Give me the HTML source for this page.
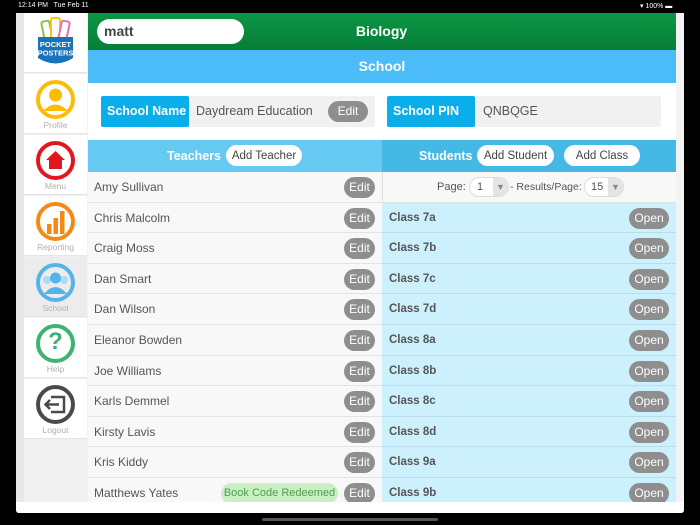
<!DOCTYPE html>
<html><head><meta charset="utf-8"><style>
*{box-sizing:border-box;margin:0;padding:0;white-space:nowrap}
body{width:700px;height:525px;background:#000;position:relative;overflow:hidden;font-family:"Liberation Sans",Arial,sans-serif}
.a{position:absolute}
.st{color:#fff;font-size:7px;top:2px}
#frame{left:16px;top:13px;width:668px;height:500px;background:#f3f3f3;border-radius:0 0 3px 3px}
.side{left:24px;width:63px;background:#fff;border-bottom:1px solid #e6e6e6}
.lbl{position:absolute;bottom:3px;width:100%;text-align:center;font-size:8.5px;color:#b0b0b0}
.ic{position:absolute;left:12px;top:6px;width:39px;height:39px;border-radius:50%;border:4px solid}
.btn{position:absolute;background:#8e8e8e;color:#fff;border-radius:11px;font-size:12px;font-weight:normal;text-align:center;line-height:21px;height:21px}
.wbtn{position:absolute;background:#fff;color:#444;border-radius:11px;font-size:11.5px;text-align:center;line-height:22px;height:21px;top:5px}
.col{position:absolute;top:172px;width:294px;height:330px;overflow:hidden}
.tr{position:relative;height:30.6px;background:#f8f8f8;border-bottom:1px solid #e3e3e3;font-size:12px;color:#555;line-height:30px;padding-left:6px}
.sr{position:relative;height:30.6px;background:#cdf0fd;border-bottom:1px solid #bcdde8;font-size:11.5px;color:#555;font-weight:bold;line-height:31px;padding-left:7px}
.tr .btn{left:256px;top:5px;width:31px}
.sr .btn{left:247px;top:5px;width:40px}
</style></head><body>
<div class="a st" style="left:18px">12:14 PM&nbsp;&nbsp; Tue Feb 11</div>
<div class="a st" style="left:640px">▾ 100% ▬</div>
<div class="a" id="frame"></div>
<div class="a" style="left:16px;top:13px;width:8px;height:490px;background:#e8e8e8"></div>
<div class="a" style="left:24px;top:13px;width:63px;height:490px;background:#f0f0f0"></div>
<div class="a side" style="top:13px;height:60px">
 <svg width="63" height="60" viewBox="0 0 63 60">
  <rect x="19" y="8" width="8" height="20" rx="2" fill="#fff" stroke="#8bc34a" stroke-width="2" transform="rotate(-12 23 18)"/>
  <rect x="27" y="5" width="9" height="20" rx="2" fill="#fff" stroke="#f5c518" stroke-width="2"/>
  <rect x="36" y="8" width="8" height="20" rx="2" fill="#fff" stroke="#e86fb0" stroke-width="2" transform="rotate(12 40 18)"/>
  <path d="M14 24 H49 V45 Q31.5 56 14 45 Z" fill="#1a73b8"/>
  <text x="31.5" y="34" font-size="7.5" font-weight="bold" fill="#fff" text-anchor="middle" font-family="Liberation Sans">POCKET</text>
  <text x="31.5" y="42.5" font-size="7.5" font-weight="bold" fill="#fff" text-anchor="middle" font-family="Liberation Sans">POSTERS</text>
 </svg>
</div>
<div class="a side" style="top:74px;height:60px"><div class="ic" style="border-color:#fbbc05"></div>
 <svg class="a" style="left:12px;top:6px" width="39" height="39" viewBox="0 0 39 39"><circle cx="19.5" cy="15" r="6.5" fill="#fbbc05"/><path d="M7 31 Q19.5 18 32 31 Z" fill="#fbbc05"/></svg><div class="lbl">Profile</div></div>
<div class="a side" style="top:135px;height:60px"><div class="ic" style="border-color:#e2171e"></div>
 <svg class="a" style="left:12px;top:6px" width="39" height="39" viewBox="0 0 39 39"><path d="M10 19 L19.5 10 L29 19 H26 V28 H13 V19 Z" fill="#e2171e"/></svg><div class="lbl">Menu</div></div>
<div class="a side" style="top:196px;height:60px"><div class="ic" style="border-color:#f28a14"></div>
 <svg class="a" style="left:12px;top:6px" width="39" height="39" viewBox="0 0 39 39"><rect x="11" y="22" width="4.5" height="10" fill="#f28a14"/><rect x="17.5" y="16" width="4.5" height="16" fill="#f28a14"/><rect x="24" y="9" width="4.5" height="23" fill="#f28a14"/></svg><div class="lbl">Reporting</div></div>
<div class="a side" style="top:257px;height:60px;background:#ececec"><div class="ic" style="border-color:#54b4ea"></div>
 <svg class="a" style="left:12px;top:6px" width="39" height="39" viewBox="0 0 39 39"><circle cx="11" cy="17" r="4" fill="#a9dbf6"/><circle cx="28" cy="17" r="4" fill="#a9dbf6"/><circle cx="19.5" cy="15" r="5.5" fill="#54b4ea"/><path d="M8 31 Q19.5 17 31 31 Z" fill="#54b4ea"/></svg><div class="lbl">School</div></div>
<div class="a side" style="top:318px;height:60px"><div class="ic" style="border-color:#3cb371"></div>
 <div class="a" style="left:12px;top:10px;width:39px;text-align:center;font-size:24px;font-weight:bold;color:#3cb371">?</div><div class="lbl">Help</div></div>
<div class="a side" style="top:379px;height:60px"><div class="ic" style="border-color:#4a4a4a"></div>
 <svg class="a" style="left:12px;top:6px" width="39" height="39" viewBox="0 0 39 39"><path d="M15 12 H28 V27 H15" fill="none" stroke="#4a4a4a" stroke-width="2.5"/><path d="M23 19.5 H10 M14 15 L9.5 19.5 L14 24" fill="none" stroke="#4a4a4a" stroke-width="2.5"/></svg><div class="lbl">Logout</div></div>

<div class="a" style="left:88px;top:13px;width:588px;height:490px;background:#fff"></div>
<div class="a" style="left:88px;top:13px;width:588px;height:37px;background:linear-gradient(#0a9744,#077d38)"></div>
<div class="a" style="left:97px;top:19px;width:147px;height:25px;background:#fff;border-radius:13px;font-size:14px;font-weight:bold;color:#444;line-height:25px;padding-left:7px">matt</div>
<div class="a" style="left:300px;top:23px;width:163px;text-align:center;color:#fff;font-size:14px;font-weight:bold">Biology</div>
<div class="a" style="left:88px;top:50px;width:588px;height:33px;background:#4bbcf8;color:#fff;font-size:14px;font-weight:bold;text-align:center;line-height:33px">School</div>

<div class="a" style="left:101px;top:96px;width:274px;height:31px;background:#f1f1f1;border-radius:2px"></div>
<div class="a" style="left:101px;top:96px;width:88px;height:31px;background:#0aaeea;border-radius:2px;color:#fff;font-weight:bold;font-size:12.5px;line-height:31px;padding-left:6px">School Name</div>
<div class="a" style="left:196px;top:96px;line-height:31px;font-size:12.5px;color:#555">Daydream Education</div>
<div class="btn" style="left:328px;top:101px;width:40px">Edit</div>
<div class="a" style="left:387px;top:96px;width:274px;height:31px;background:#f1f1f1;border-radius:2px"></div>
<div class="a" style="left:387px;top:96px;width:88px;height:31px;background:#0aaeea;border-radius:2px;color:#fff;font-weight:bold;font-size:12.5px;line-height:31px;padding-left:6px">School PIN</div>
<div class="a" style="left:483px;top:96px;line-height:31px;font-size:12.5px;color:#555">QNBQGE</div>

<div class="a" style="left:88px;top:140px;width:294px;height:32px;background:#66c9f2">
 <div class="a" style="left:79px;top:0;line-height:32px;color:#fff;font-weight:bold;font-size:12.5px">Teachers</div>
 <div class="wbtn" style="left:138px;width:76px">Add Teacher</div></div>
<div class="a" style="left:382px;top:140px;width:294px;height:32px;background:#45b9e6">
 <div class="a" style="left:37px;top:0;line-height:32px;color:#fff;font-weight:bold;font-size:12.5px">Students</div>
 <div class="wbtn" style="left:95px;width:77px">Add Student</div>
 <div class="wbtn" style="left:182px;width:76px">Add Class</div></div>

<div class="col" style="left:88px">
<div class="tr">Amy Sullivan<div class="btn">Edit</div></div>
<div class="tr">Chris Malcolm<div class="btn">Edit</div></div>
<div class="tr">Craig Moss<div class="btn">Edit</div></div>
<div class="tr">Dan Smart<div class="btn">Edit</div></div>
<div class="tr">Dan Wilson<div class="btn">Edit</div></div>
<div class="tr">Eleanor Bowden<div class="btn">Edit</div></div>
<div class="tr">Joe Williams<div class="btn">Edit</div></div>
<div class="tr">Karls Demmel<div class="btn">Edit</div></div>
<div class="tr">Kirsty Lavis<div class="btn">Edit</div></div>
<div class="tr">Kris Kiddy<div class="btn">Edit</div></div>
<div class="tr">Matthews Yates<div class="btn" style="left:133px;width:117px;background:#c9efc4;color:#4f9e4a;font-size:11px">Book Code Redeemed</div><div class="btn">Edit</div></div>
</div>

<div class="col" style="left:382px">
<div class="tr" style="border-left:1px solid #ddd;font-size:11px;padding:0">
 <span class="a" style="left:54px">Page:</span>
 <div class="a" style="left:86px;top:5px;width:40px;height:20px;background:#fff;border:1px solid #ddd;border-radius:10px;line-height:18px;padding-left:7px">1<span class="a" style="right:0;top:0;width:15px;height:18px;background:#e4e4e4;border-radius:0 10px 10px 0;color:#888;font-size:9px;text-align:center">▼</span></div>
 <span class="a" style="left:127px;font-size:10.5px">- Results/Page:</span>
 <div class="a" style="left:201px;top:5px;width:40px;height:20px;background:#fff;border:1px solid #ddd;border-radius:10px;line-height:18px;padding-left:6px">15<span class="a" style="right:0;top:0;width:15px;height:18px;background:#e4e4e4;border-radius:0 10px 10px 0;color:#888;font-size:9px;text-align:center">▼</span></div>
</div>
<div class="sr">Class 7a<div class="btn">Open</div></div>
<div class="sr">Class 7b<div class="btn">Open</div></div>
<div class="sr">Class 7c<div class="btn">Open</div></div>
<div class="sr">Class 7d<div class="btn">Open</div></div>
<div class="sr">Class 8a<div class="btn">Open</div></div>
<div class="sr">Class 8b<div class="btn">Open</div></div>
<div class="sr">Class 8c<div class="btn">Open</div></div>
<div class="sr">Class 8d<div class="btn">Open</div></div>
<div class="sr">Class 9a<div class="btn">Open</div></div>
<div class="sr">Class 9b<div class="btn">Open</div></div>
</div>

<div class="a" style="left:16px;top:502px;width:668px;height:11px;background:#fff;border-radius:0 0 3px 3px"></div>
<div class="a" style="left:262px;top:518px;width:176px;height:3px;background:#555;border-radius:2px"></div>
</body></html>
